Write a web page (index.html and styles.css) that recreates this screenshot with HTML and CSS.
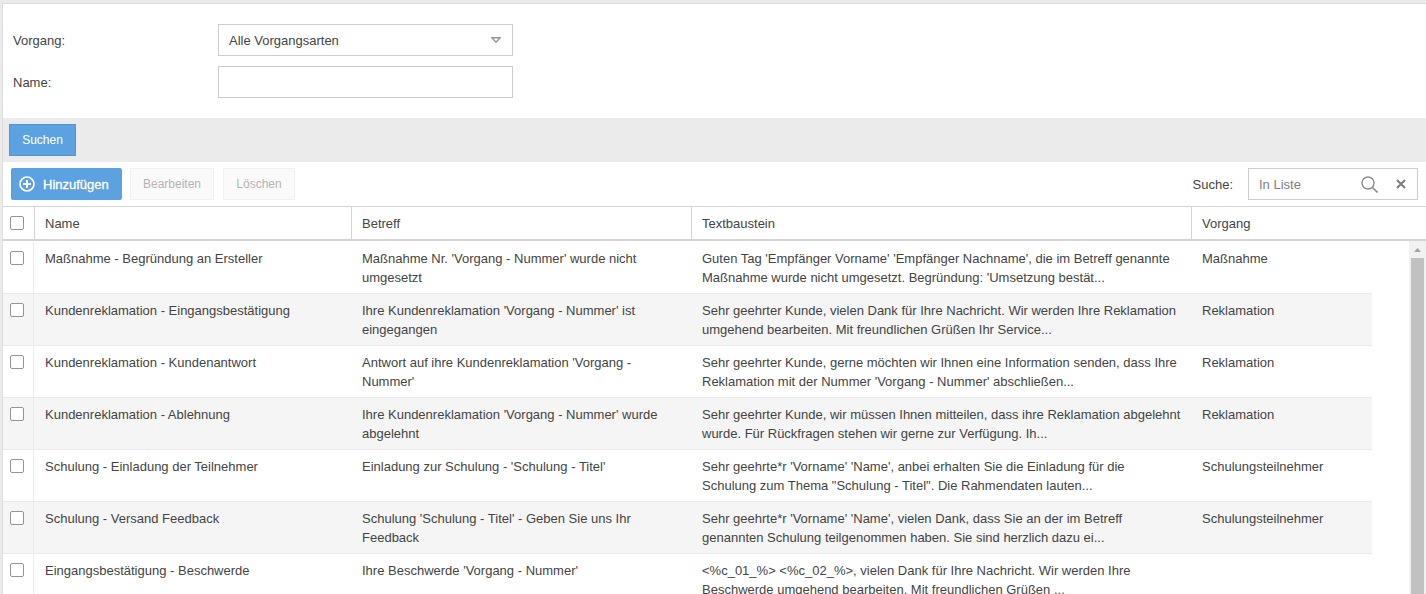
FILE: index.html
```html
<!DOCTYPE html>
<html lang="de">
<head>
<meta charset="utf-8">
<title>Textbausteine</title>
<link rel="stylesheet" href="styles.css">
</head>
<body>
<div class="frame">
  <form class="filter">
    <div class="field">
      <label class="field-label">Vorgang:</label>
      <div class="select"><span>Alle Vorgangsarten</span>
        <svg class="caret" width="10" height="6" viewBox="0 0 10 6"><path d="M.8.8h8.400L5 5.200z" fill="none" stroke="#999" stroke-width="1.500"/></svg>
      </div>
    </div>
    <div class="field">
      <label class="field-label">Name:</label>
      <div class="input"></div>
    </div>
  </form>
  <div class="searchbar"><button class="btn-search" type="button">Suchen</button></div>
  <div class="toolbar">
    <button class="btn-add" type="button">
      <svg width="16" height="16" viewBox="0 0 16 16"><circle cx="8" cy="8" r="7" fill="none" stroke="#fff" stroke-width="1.700"/><path d="M8 4v8M4 8h8" stroke="#fff" stroke-width="2"/></svg>
      Hinzufügen</button>
    <button class="btn-off btn-edit" type="button">Bearbeiten</button>
    <button class="btn-off btn-del" type="button">Löschen</button>
    <span class="spacer"></span>
    <span class="search-label">Suche:</span>
    <div class="search-box">
      <span class="placeholder">In Liste</span>
      <svg class="ico-search" width="17" height="17" viewBox="0 0 17 17"><circle cx="7" cy="7" r="6" fill="none" stroke="#8a8a8a" stroke-width="1.400"/><path d="M11.500 11.500l5 5" stroke="#8a8a8a" stroke-width="1.600"/></svg>
      <svg class="ico-x" width="10" height="10" viewBox="0 0 10 10"><path d="M1 1l8 8M9 1l-8 8" stroke="#7d7d7d" stroke-width="2"/></svg>
    </div>
  </div>
  <div class="thead">
    <div class="th th-check"><span class="check"></span></div>
    <div class="th">Name</div>
    <div class="th">Betreff</div>
    <div class="th">Textbaustein</div>
    <div class="th">Vorgang</div>
  </div>
  <div class="tbody">
    <div class="rows">
      <div class="row"><div class="td td-check"><span class="check"></span></div><div class="td">Maßnahme - Begründung an Ersteller</div><div class="td">Maßnahme Nr. 'Vorgang - Nummer' wurde nicht umgesetzt</div><div class="td">Guten Tag 'Empfänger Vorname' 'Empfänger Nachname', die im Betreff genannte Maßnahme wurde nicht umgesetzt. Begründung: 'Umsetzung bestät...</div><div class="td">Maßnahme</div></div>
      <div class="row alt"><div class="td td-check"><span class="check"></span></div><div class="td">Kundenreklamation - Eingangsbestätigung</div><div class="td">Ihre Kundenreklamation 'Vorgang - Nummer' ist eingegangen</div><div class="td">Sehr geehrter Kunde, vielen Dank für Ihre Nachricht. Wir werden Ihre Reklamation umgehend bearbeiten. Mit freundlichen Grüßen Ihr Service...</div><div class="td">Reklamation</div></div>
      <div class="row"><div class="td td-check"><span class="check"></span></div><div class="td">Kundenreklamation - Kundenantwort</div><div class="td">Antwort auf ihre Kundenreklamation 'Vorgang - Nummer'</div><div class="td">Sehr geehrter Kunde, gerne möchten wir Ihnen eine Information senden, dass Ihre Reklamation mit der Nummer 'Vorgang - Nummer' abschließen...</div><div class="td">Reklamation</div></div>
      <div class="row alt"><div class="td td-check"><span class="check"></span></div><div class="td">Kundenreklamation - Ablehnung</div><div class="td">Ihre Kundenreklamation 'Vorgang - Nummer' wurde abgelehnt</div><div class="td">Sehr geehrter Kunde, wir müssen Ihnen mitteilen, dass ihre Reklamation abgelehnt wurde. Für Rückfragen stehen wir gerne zur Verfügung. Ih...</div><div class="td">Reklamation</div></div>
      <div class="row"><div class="td td-check"><span class="check"></span></div><div class="td">Schulung - Einladung der Teilnehmer</div><div class="td">Einladung zur Schulung - 'Schulung - Titel'</div><div class="td">Sehr geehrte*r 'Vorname' 'Name', anbei erhalten Sie die Einladung für die Schulung zum Thema "Schulung - Titel". Die Rahmendaten lauten...</div><div class="td">Schulungsteilnehmer</div></div>
      <div class="row alt"><div class="td td-check"><span class="check"></span></div><div class="td">Schulung - Versand Feedback</div><div class="td">Schulung 'Schulung - Titel' - Geben Sie uns Ihr Feedback</div><div class="td">Sehr geehrte*r 'Vorname' 'Name', vielen Dank, dass Sie an der im Betreff genannten Schulung teilgenommen haben. Sie sind herzlich dazu ei...</div><div class="td">Schulungsteilnehmer</div></div>
      <div class="row"><div class="td td-check"><span class="check"></span></div><div class="td">Eingangsbestätigung - Beschwerde</div><div class="td">Ihre Beschwerde 'Vorgang - Nummer'</div><div class="td">&lt;%c_01_%&gt; &lt;%c_02_%&gt;, vielen Dank für Ihre Nachricht. Wir werden Ihre Beschwerde umgehend bearbeiten. Mit freundlichen Grüßen ...</div><div class="td"></div></div>
    </div>
    <div class="scrollbar">
      <svg class="arrow" width="7" height="4" viewBox="0 0 7 4"><path d="M3.500 0L7 4H0z" fill="#a3a3a3"/></svg>
      <div class="thumb"></div>
    </div>
  </div>
</div>
</body>
</html>
```
FILE: styles.css
```css
* { box-sizing: border-box; }
html, body { margin: 0; height: 100%; overflow: hidden; }
body { background: #ebebeb; font-family: "Liberation Sans", Arial, sans-serif; font-size: 13px; color: #444; padding-top: 3px; padding-left: 2px; }
.frame { height: 591px; background: #fff; border-top: 1px solid #dcdcdc; border-left: 1px solid #dcdcdc; overflow: hidden; display: flex; flex-direction: column; }

.filter { height: 114px; padding: 20px 0 0 10px; display: flex; flex-direction: column; gap: 10px; flex: none; }
.field { display: flex; align-items: center; height: 32px; padding-top: 1px; }
.field-label { width: 205px; color: #444; }
.select, .input { width: 295px; height: 32px; border: 1px solid #ccc; background: #fff; margin-top: -1px; }
.select { display: flex; align-items: center; justify-content: space-between; padding: 0 11px 0 10px; }
.select span { padding-top: 1px; }
.input { display: block; }

.searchbar { height: 44px; background: #ebebeb; padding: 6px; flex: none; }
.btn-search { width: 67px; height: 32px; background: #5da2e0; border: 1px solid #4f94d4; color: #fff; font: 12px "Liberation Sans", Arial, sans-serif; padding: 0; display: block; }

.toolbar { height: 44px; display: flex; align-items: center; padding: 0 8px; flex: none; }
.btn-add { width: 111px; height: 32px; background: #5da2e0; border: 0; border-radius: 2px; color: #fff; font: 13px "Liberation Sans", Arial, sans-serif; -webkit-text-stroke: .3px #fff; display: flex; align-items: center; gap: 8px; padding: 0 0 0 8px; }
.btn-off { height: 32px; padding: 0; background: #fafafa; border: 1px solid #f0f0f0; color: #b4b4b4; font: 12px "Liberation Sans", Arial, sans-serif; }
.btn-edit { width: 84px; margin: 0 9px 0 8px; }
.btn-del { width: 72px; }
.spacer { flex: 1; }
.search-label { margin-right: 15px; }
.search-box { width: 170px; height: 32px; border: 1px solid #ccc; display: flex; align-items: center; padding: 0 11px 0 10px; }
.placeholder { color: #808080; flex: 1; }
.ico-search { margin-right: 1px; }
.ico-x { margin-left: 17px; }

.thead { display: grid; grid-template-columns: 31px 317px 340px 500px 1fr; height: 35px; border-top: 1px solid #d4d4d4; border-bottom: 2px solid #d4d4d4; flex: none; }
.th { display: flex; align-items: center; padding: 0 10px; border-left: 1px solid #d4d4d4; color: #444; }
.th-check { border-left: 0; padding: 0 0 0 7px; }

.tbody { flex: 1; display: flex; min-height: 0; }
.rows { width: 1369px; flex: none; }
.row { display: grid; grid-template-columns: 31px 317px 340px 500px 1fr; height: 52px; border-top: 1px solid #ebebeb; }
.row:first-child { border-top-color: transparent; }
.row.alt { background: #f5f5f5; }
.td { padding: 7px 10px 0 11px; line-height: 19px; }
.td-check { padding: 9px 0 0 7px; line-height: 0; border-right: 1px solid #ebebeb; }
.check { display: inline-block; width: 14px; height: 14px; border: 1px solid #949494; border-radius: 2px; background: #fff; }

.scrollbar { margin-left: auto; width: 17px; background: #f1f1f1; padding: 7px 0 0 2px; display: flex; flex-direction: column; }
.arrow { flex: none; margin-left: 3px; }
.thumb { width: 13px; flex: 1; margin-top: 6px; background: #c1c1c1; }
```
